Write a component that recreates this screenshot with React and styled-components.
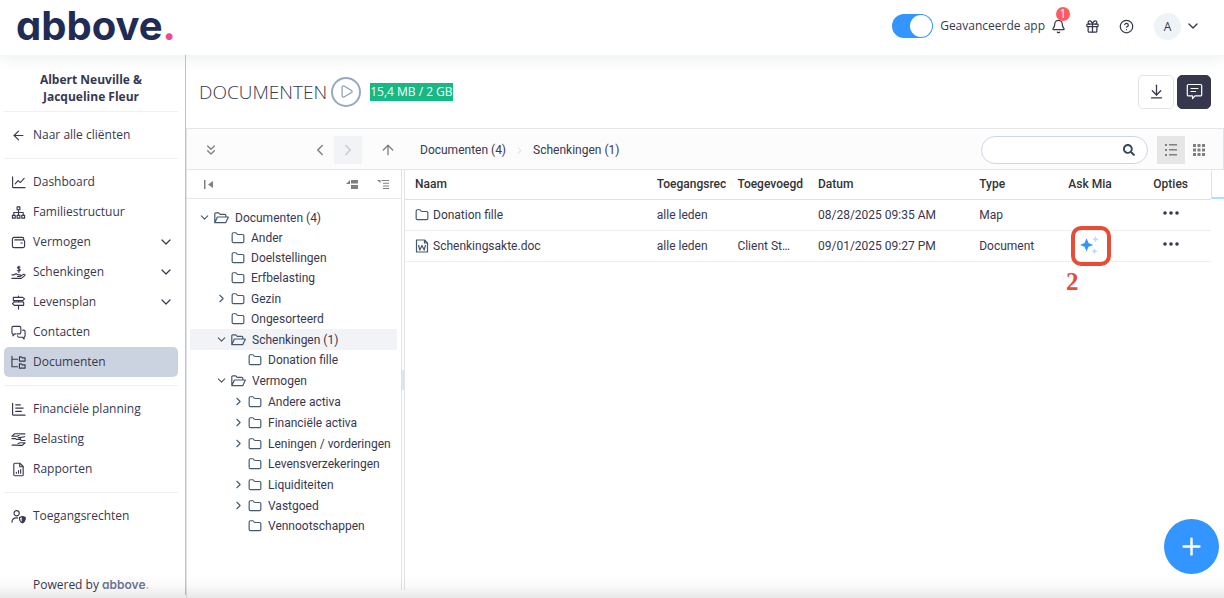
import React, {useState} from 'react';
import styled, {createGlobalStyle, css} from 'styled-components';
import {
  ArrowLeft, ArrowUp, ArrowDownToLine, Bell, ChevronDown, ChevronLeft, ChevronRight,
  ChevronsDown, CircleHelp, Gift, Folder, Play, Plus
} from 'lucide-react';
import {FaSearch} from 'react-icons/fa';

const GlobalStyle = createGlobalStyle`
  *{
    box-sizing: border-box;
  }
  body{
    margin: 0;
    background: #fff;
    color: #37384f;
    font: 12px/20px "Open Sans", sans-serif;
  }
  button, input{
    font: inherit;
    color: inherit;
  }
  button{
    padding: 0;
    border: 0;
    background: none;
    cursor: pointer;
  }
  svg{
    display: block;
    flex: none;
  }
`;

const Page = styled.div`
  min-height: 100vh;
  display: flex;
  flex-direction: column;
`;

const BottomShade = styled.div`
  position: fixed;
  left: 0;
  right: 0;
  bottom: 0;
  height: 24px;
  background: linear-gradient(transparent, rgba(0,0,0,0.02) 50%, rgba(0,0,0,0.09));
  pointer-events: none;
`;

/* top bar */

const TopBar = styled.header`
  height: 55px;
  padding: 0 23px 3px 16px;
  display: flex;
  align-items: center;
  justify-content: space-between;
  background: #fff;
  box-shadow: 0 4px 14px rgba(30,60,70,0.08);
  z-index: 2;
`;

const Wordmark = styled.a`
  font-family: Inter, sans-serif;
  font-weight: ${p => p.$small ? 600 : 700};
  font-size: ${p => p.$small ? 12 : 40}px;
  line-height: ${p => p.$small ? 20 : 48}px;
  font-feature-settings: "cv11";
  color: ${p => p.$small ? '#6f7697' : '#212c56'};
  text-decoration: none;

  & span{
    color: ${p => p.$small ? '#f5a3c7' : '#ee4a93'};
  }
`;

const TopTools = styled.div`
  display: flex;
  align-items: center;
`;

const SwitchLabel = styled.label`
  display: flex;
  align-items: center;
  gap: 7px;
  margin-right: 6px;
  cursor: pointer;
`;

const SwitchInput = styled.input`
  appearance: none;
  width: 41px;
  height: 24px;
  margin: 0;
  padding: 1px;
  display: flex;
  border-radius: 12px;
  background: #c4c9d4;

  &:checked{
    background: #3395ff;
    justify-content: flex-end;
  }

  &::before{
    content: "";
    width: 22px;
    height: 22px;
    border-radius: 50%;
    background: #fff;
  }
`;

const TopButton = styled.button`
  position: relative;
  margin-right: ${p => p.$gap}px;
`;

const Count = styled.span`
  position: absolute;
  top: -12px;
  right: -4px;
  width: 14px;
  height: 14px;
  border-radius: 50%;
  background: #ff5a5f;
  color: #fff;
  line-height: 14px;
  text-align: center;
`;

const Account = styled.button`
  display: flex;
  align-items: center;
  gap: 4px;
`;

const Avatar = styled.span`
  width: 27px;
  height: 27px;
  border-radius: 50%;
  background: #eef3f7;
  line-height: 27px;
`;

/* sidebar */

const Body = styled.div`
  flex: 1;
  display: flex;
`;

const Sidebar = styled.nav`
  flex: none;
  width: 186px;
  margin-bottom: 3px;
  padding: 16px 7px 0 4px;
  display: flex;
  flex-direction: column;
  border-right: 1px solid #c4c4c8;
`;

const Family = styled.h2`
  margin: 0;
  font-size: 12px;
  line-height: 17px;
  font-weight: 700;
  text-align: center;
`;

const Divider = styled.hr`
  width: 100%;
  margin: ${p => p.$tight ? '6px 0 8px' : '8px 0'};
  border: 0;
  border-top: 1px solid #efeff1;
`;

const NavLink = styled.a`
  height: 30px;
  padding: 0 4px 0 7px;
  display: flex;
  align-items: center;
  gap: 7px;
  border-radius: 5px;
  color: inherit;
  text-decoration: none;
  ${p => p.$active && css`background: #cad3df;`}

  & > svg:nth-of-type(2){
    margin-left: auto;
  }
`;

const Powered = styled.div`
  margin: auto 0 0 29px;
`;

/* page heading */

const Main = styled.main`
  flex: 1;
  min-width: 0;
  display: flex;
  flex-direction: column;
`;

const Heading = styled.div`
  height: 73px;
  padding: 0 13px;
  display: flex;
  align-items: center;
`;

const Title = styled.h1`
  margin: 0 4px 0 0;
  font-size: 19px;
  line-height: 28px;
  font-weight: 300;
`;

const PlayButton = styled.button`
  width: 30px;
  height: 30px;
  margin-right: 9px;
  display: grid;
  place-items: center;
  border: 2px solid #98a9bf;
  border-radius: 50%;
  color: #8c9eb8;
`;

const Usage = styled.span`
  background: #16b884;
  color: #fff;
  line-height: 18px;
`;

const HeadButtons = styled.div`
  margin-left: auto;
  display: flex;
  gap: 3px;
`;

const SquareButton = styled.button`
  width: ${p => p.$dark ? 34 : 36}px;
  height: 34px;
  display: grid;
  place-items: center;
  border-radius: 5px;
  border: 1px solid ${p => p.$dark ? '#36364d' : '#e3e3e6'};
  background: ${p => p.$dark ? '#36364d' : '#fff'};
  color: ${p => p.$dark ? '#fff' : '#37384f'};
`;

/* file manager */

const Manager = styled.section`
  flex: 1;
  display: flex;
  flex-direction: column;
  border-top: 1px solid #e4e6e8;
  border-left: 1px solid #dfe3e8;
  font-family: Roboto, sans-serif;
`;

const ManagerBar = styled.div`
  height: 41px;
  padding: 2px 10px 0;
  display: flex;
  align-items: center;
  background: #fcfcfc;
  border-bottom: 1px solid #e4e6e8;
  border-right: 1px solid #dfe3e8;
  color: #808080;
`;

const IconButton = styled.button`
  width: 28px;
  height: 28px;
  display: grid;
  place-items: center;
  color: ${p => p.disabled ? '#c8cbd0' : '#808080'};
  background: ${p => p.disabled ? '#f1f3f7' : p.$on ? '#e6e6e6' : 'none'};
`;

const TreeControls = styled.div`
  flex: none;
  width: 205px;
  display: flex;

  & > :nth-child(2){
    margin-left: auto;
  }
  & > :last-child{
    margin: 0 0 0 12px;
  }
`;

const Crumbs = styled.div`
  padding-left: 18px;
  display: flex;
  align-items: center;
  gap: 8px;
  color: #37384f;

  & svg{
    color: #d5d5d8;
  }
`;

const SearchBox = styled.label`
  width: 167px;
  height: 28px;
  margin: 0 9px 0 auto;
  padding: 0 12px;
  display: flex;
  align-items: center;
  border: 1px solid #ccd6e8;
  border-radius: 14px;
  background: #fff;
  color: #33475b;

  & input{
    flex: 1;
    min-width: 0;
    border: 0;
    outline: 0;
    background: none;
  }
`;

const Panes = styled.div`
  flex: 1;
  margin-bottom: 8px;
  display: flex;
`;

const TreePane = styled.aside`
  flex: none;
  width: 215px;
  border-right: 1px solid #dfe3e8;
`;

const TreeBar = styled.div`
  height: 29px;
  padding: 0 4px 0 7px;
  display: flex;
  align-items: center;
  border-bottom: 1px solid #e4e6e8;

  & > :nth-child(2){
    margin: 0 3px 0 auto;
  }
`;

const Tree = styled.ul`
  margin: 0;
  padding: ${p => p.$root ? '8px 4px 0 3px' : 0};
  list-style: none;
`;

const TreeRow = styled.div`
  height: ${p => p.$expandable ? 21 : 20}px;
  padding-left: ${p => p.$level * 17 + 8}px;
  display: flex;
  align-items: center;
  white-space: nowrap;
  background: ${p => p.$selected ? '#f1f3f7' : 'none'};

  & > button, & > span:first-child{
    width: 14px;
    margin-right: 2px;
  }
  & > svg{
    margin-right: 6px;
  }
`;

const Splitter = styled.div`
  flex: none;
  width: 3px;
  display: flex;
  align-items: center;
  border-right: 1px solid #dfe3e8;

  &::before{
    content: "";
    width: 3px;
    height: 20px;
    background: #d9e6f0;
  }
`;

const FilePane = styled.div`
  flex: 1;
  min-width: 0;
  display: flex;
  align-items: flex-start;
`;

const FileTable = styled.table`
  width: 100%;
  min-width: 0;
  table-layout: fixed;
  border-collapse: collapse;

  & th, & td{
    height: 31px;
    padding: 0 14px 0 10px;
    overflow: hidden;
    text-align: left;
    white-space: nowrap;
    font-weight: 400;
    border-bottom: 1px solid #eceef0;
  }
  & td{
    text-overflow: ellipsis;
  }
  & th{
    height: 29px;
    padding-right: 0;
    font-weight: 500;
    color: #333;
    border-color: #dddfe2;
  }
  & .center{
    padding: 0;
    text-align: center;
    overflow: visible;
  }
  & .center > button{
    display: block;
    margin: 0 auto;
  }
`;

/* the column title is cut 1px before the next column */
const HeadText = styled.span`
  display: block;
  margin-right: 1px;
  overflow: hidden;
`;

const FileName = styled.span`
  display: flex;
  align-items: center;
  gap: 4px;
`;

const MiaButton = styled.button`
  position: relative;
`;

const OptionsButton = styled.button`
  padding: 2px 0 6px;
`;

const Marker = styled.span`
  position: absolute;
  left: -9px;
  top: -10px;
  width: 40px;
  height: 40px;
  border: 4px solid #e64d38;
  border-radius: 10px;

  & b{
    position: absolute;
    left: -9px;
    top: 38px;
    color: #e64d38;
    font: 700 25px/28px "Liberation Serif", serif;
  }
`;

const Gutter = styled.div`
  flex: none;
  width: 13px;
  height: 29px;
  border-left: 1px solid #dfe3e8;
  border-bottom: 2px solid #a9e3f5;
`;

const AddButton = styled.button`
  position: fixed;
  right: 5px;
  bottom: 24px;
  width: 55px;
  height: 55px;
  display: grid;
  place-items: center;
  border-radius: 50%;
  background: #3395ff;
  color: #fff;
`;

const Glyph = ({size = 15, children}) => (
  <svg width={size} height={size} viewBox="0 0 16 16" fill="none" stroke="currentColor"
    strokeWidth="1.2" strokeLinecap="round" strokeLinejoin="round" aria-hidden="true">
    {children}
  </svg>
);

const icons = {
  dashboard: <Glyph><path d="M1.700 2v10.500a1 1 0 0 0 1 1H15M4.500 9.500l3-3.500 2.500 2 4-4.500"/></Glyph>,
  family: <Glyph><path d="M6.500 2h3v3h-3zM1.500 11h3v3h-3zM6.500 11h3v3h-3zM11.500 11h3v3h-3zM8 5v6M3 11V8h10v3"/></Glyph>,
  wallet: <Glyph><path d="M13.500 5.200V3.800a1.300 1.300 0 0 0-1.300-1.300H3.300A1.800 1.800 0 0 0 1.500 4.300v7.400a1.800 1.800 0 0 0 1.800 1.800h9.400a1.800 1.800 0 0 0 1.800-1.800V7a1.800 1.800 0 0 0-1.800-1.800H4M10.500 8.500h1.500"/></Glyph>,
  gift: <Glyph><path d="M1 10.500h2.200c1.600-1.600 3.200-1 4.300 0h2.200c1.200 0 1 1.700 0 1.700H7M10.500 11.800l2.700-1.800c1.300-.6 2.300.6 1.200 1.600L11 14.300H1M9.700 2.300C8.800 1.700 7 1.900 7 3s2.800 1 2.800 2.200S7.800 6.700 6.800 6M8.400 1v7"/></Glyph>,
  plan: <Glyph><path d="M8 1v1.500M8 6v1.500M8 11v4M2.500 2.500h10L14.500 4.200 12.500 6h-10zM13.500 7.500h-10L1.500 9.200l2 1.800h10z"/></Glyph>,
  contacts: <Glyph><path d="M5 9.500H4L2 11.500V9.400A1.500 1.500 0 0 1 1 8V3a1.500 1.500 0 0 1 1.500-1.500h6.500A1.500 1.500 0 0 1 10.500 3v5A1.500 1.500 0 0 1 9 9.500H6.500M12.500 5.500h1A1.500 1.500 0 0 1 15 7v4.500a1.500 1.500 0 0 1-1 1.400v2L12 13H8.500A1.500 1.500 0 0 1 7 11.500"/></Glyph>,
  documents: <Glyph><path d="M1 1.500V12.500H7M1 4.500H7M9 2h2l1 1h3v3.500H9zM9 9.500h2l1 1h3V14H9z"/></Glyph>,
  planning: <Glyph><path d="M1.700 1.500v11.500a1 1 0 0 0 1 1H15M5 3h5M5 6.500h8M5 10h6"/></Glyph>,
  tax: <Glyph><path d="M14.800 2H9.500L8.200 1.800H4L1 4.500h5.500l2-.8M1 7h3.500l1.500 1h3c1.500 0 1.500-1.700 0-1.700H7.500L14.500 5M1.200 14h5.300l1.300.3H12l3-2.800H9.500l-2 .8M15 9h-3.500L10 8.200"/></Glyph>,
  reports: <Glyph><path d="M3 2.500A1.200 1.200 0 0 1 4.200 1.300H9.500L13 4.800v8.700a1.200 1.200 0 0 1-1.200 1.200H4.200A1.200 1.200 0 0 1 3 13.500zM9.300 1.500V5H13M5.700 12v-1M8 12V9M10.300 12V8"/></Glyph>,
  access: (
    <Glyph>
      <circle cx="6" cy="4.500" r="2.800"/>
      <path d="M1 14c0-3 2-4.500 5-4.500h1"/>
      <path d="M12 8l3 1.200c0 2.700-1 4.500-3 5.500-2-1-3-2.800-3-5.500z"/>
      <path d="M12 8l3 1.200c0 2.700-1 4.500-3 5.500z" fill="currentColor"/>
    </Glyph>
  )
};

const menu = [
  [
    {label: 'Dashboard', icon: 'dashboard'},
    {label: 'Familiestructuur', icon: 'family'},
    {label: 'Vermogen', icon: 'wallet', sub: true},
    {label: 'Schenkingen', icon: 'gift', sub: true},
    {label: 'Levensplan', icon: 'plan', sub: true},
    {label: 'Contacten', icon: 'contacts'},
    {label: 'Documenten', icon: 'documents', active: true}
  ],
  [
    {label: 'Financiële planning', icon: 'planning'},
    {label: 'Belasting', icon: 'tax'},
    {label: 'Rapporten', icon: 'reports'}
  ],
  [
    {label: 'Toegangsrechten', icon: 'access'}
  ]
];

const folders = [
  {name: 'Documenten (4)', open: true, children: [
    {name: 'Ander'},
    {name: 'Doelstellingen'},
    {name: 'Erfbelasting'},
    {name: 'Gezin', more: true},
    {name: 'Ongesorteerd'},
    {name: 'Schenkingen (1)', open: true, selected: true, children: [
      {name: 'Donation fille'}
    ]},
    {name: 'Vermogen', open: true, children: [
      {name: 'Andere activa', more: true},
      {name: 'Financiële activa', more: true},
      {name: 'Leningen / vorderingen', more: true},
      {name: 'Levensverzekeringen'},
      {name: 'Liquiditeiten', more: true},
      {name: 'Vastgoed', more: true},
      {name: 'Vennootschappen'}
    ]}
  ]}
];

const files = [
  {name: 'Donation fille', access: 'alle leden', by: '', date: '08/28/2025 09:35 AM', type: 'Map'},
  {name: 'Schenkingsakte.doc', access: 'alle leden', by: 'Client Status', date: '09/01/2025 09:27 PM', type: 'Document', mia: true}
];

const OpenFolder = () => (
  <svg width="15" height="14" viewBox="0 0 15 14" fill="none" stroke="#44596c" strokeWidth="1.2" strokeLinejoin="round">
    <path d="M.8 11.500V2.800a1 1 0 0 1 1-1h2.900l1.500 1.500h4.600a1 1 0 0 1 1 1V6M.8 11.700 3.400 6h11L11.700 11.700z"/>
  </svg>
);

const ClosedFolder = () => <Folder size={14} strokeWidth={2} color="#44596c"/>;

const WordFile = () => (
  <svg width="14" height="14" viewBox="0 0 14 14" fill="none" stroke="#44596c" strokeWidth="1.2" strokeLinejoin="round">
    <path d="M1.500 1h8L12.500 4v9h-11zM9.500 1v3h3"/>
    <path d="M3.500 6l1.300 5L7 6.500 9.200 11l1.300-5"/>
  </svg>
);

const Comment = () => (
  <svg width="17" height="17" viewBox="0 0 17 17" fill="none" stroke="#fff" strokeWidth="1.2" strokeLinecap="round" strokeLinejoin="round">
    <path d="M2.500 1.500h12a1.200 1.200 0 0 1 1.200 1.200v9a1.200 1.200 0 0 1-1.200 1.200H9L6.500 15.500V12.900h-4a1.200 1.200 0 0 1-1.200-1.200v-9a1.200 1.200 0 0 1 1.200-1.200zM5 5.500h7M5 8.500h4.500"/>
  </svg>
);

const Sparkles = () => (
  <svg width="20" height="20" viewBox="0 0 20 20">
    <path fill="#3395ff" d="M6.500 2.200 8.500 7l4.700 1.900L8.500 10.800 6.500 15.500 4.600 10.800 0 8.900 4.600 7z"/>
    <path fill="#bcdcff" d="M15.500 0l1 2.300 2.300 1-2.300 1-1 2.300-1-2.300-2.300-1 2.300-1zM14.500 12l1 2.300 2.300 1-2.300 1-1 2.300-1-2.300-2.300-1 2.300-1z"/>
  </svg>
);

const Dots = () => (
  <svg width="16" height="4" viewBox="0 0 16 4" fill="#37384f">
    <circle cx="2" cy="2" r="1.8"/><circle cx="8" cy="2" r="1.8"/><circle cx="14" cy="2" r="1.8"/>
  </svg>
);

const Branch = ({items, level}) => (
  <Tree $root={level === 0}>
    {items.map(item => (
      <li key={item.name}>
        <TreeRow $level={level} $selected={item.selected} $expandable={item.open || item.more}>
          {item.open || item.more ? (
            <button aria-label={item.name}>
              {item.open ? <ChevronDown size={13} color="#44596c"/> : <ChevronRight size={13} color="#44596c"/>}
            </button>
          ) : <span/>}
          {item.open ? <OpenFolder/> : <ClosedFolder/>}
          {item.name}
        </TreeRow>
        {item.children && <Branch items={item.children} level={level + 1}/>}
      </li>
    ))}
  </Tree>
);

const Menu = () => (
  <Sidebar>
    <Family>Albert Neuville &amp;<br/>Jacqueline Fleur</Family>
    <Divider $tight/>
    <NavLink href="#clients"><ArrowLeft size={15} strokeWidth={1.8}/>Naar alle cliënten</NavLink>
    {menu.map((group, i) => (
      <React.Fragment key={i}>
        <Divider/>
        {group.map(item => (
          <NavLink key={item.label} href="#" $active={item.active}>
            {icons[item.icon]}
            {item.label}
            {item.sub && <ChevronDown size={16} strokeWidth={1.8}/>}
          </NavLink>
        ))}
      </React.Fragment>
    ))}
    <Powered>Powered by <Wordmark $small href="#abbove">abbove<span>.</span></Wordmark></Powered>
  </Sidebar>
);

const Files = () => (
  <FilePane>
    <FileTable>
      <colgroup>
        <col width="30%"/><col width="10%"/><col width="10%"/><col width="20%"/>
        <col width="10%"/><col width="10%"/><col width="10%"/>
      </colgroup>
      <thead>
        <tr>
          <th>Naam</th><th><HeadText>Toegangsrechten</HeadText></th><th>Toegevoegd</th><th>Datum</th><th>Type</th>
          <th className="center">Ask Mia</th><th className="center">Opties</th>
        </tr>
      </thead>
      <tbody>
        {files.map(file => (
          <tr key={file.name}>
            <td>
              <FileName>
                {file.mia ? <WordFile/> : <ClosedFolder/>}
                {file.name}
              </FileName>
            </td>
            <td>{file.access}</td>
            <td>{file.by}</td>
            <td>{file.date}</td>
            <td>{file.type}</td>
            <td className="center">
              {file.mia && <MiaButton aria-label="Ask Mia"><Sparkles/><Marker><b>2</b></Marker></MiaButton>}
            </td>
            <td className="center"><OptionsButton aria-label="Opties"><Dots/></OptionsButton></td>
          </tr>
        ))}
      </tbody>
    </FileTable>
    <Gutter/>
  </FilePane>
);

export default function App(){
  const [advanced, setAdvanced] = useState(true);
  const [query, setQuery] = useState('');

  return(
    <Page>
      <GlobalStyle/>
      <TopBar>
        <Wordmark href="#home">abbove<span>.</span></Wordmark>
        <TopTools>
          <SwitchLabel>
            <SwitchInput type="checkbox" checked={advanced} onChange={e => setAdvanced(e.target.checked)}/>
            Geavanceerde app
          </SwitchLabel>
          <TopButton $gap={19} aria-label="Meldingen"><Bell size={15}/><Count>1</Count></TopButton>
          <TopButton $gap={19} aria-label="Nieuw"><Gift size={15}/></TopButton>
          <TopButton $gap={20} aria-label="Help"><CircleHelp size={15}/></TopButton>
          <Account aria-label="Account"><Avatar>A</Avatar><ChevronDown size={16}/></Account>
        </TopTools>
      </TopBar>
      <Body>
        <Menu/>
        <Main>
          <Heading>
            <Title>DOCUMENTEN</Title>
            <PlayButton aria-label="Uitleg"><Play size={15}/></PlayButton>
            <Usage>15,4 MB / 2 GB</Usage>
            <HeadButtons>
              <SquareButton aria-label="Download"><ArrowDownToLine size={17} strokeWidth={1.8}/></SquareButton>
              <SquareButton $dark aria-label="Berichten"><Comment/></SquareButton>
            </HeadButtons>
          </Heading>
          <Manager>
            <ManagerBar>
              <TreeControls>
                <IconButton aria-label="Uitklappen"><ChevronsDown size={16}/></IconButton>
                <IconButton aria-label="Terug"><ChevronLeft size={18}/></IconButton>
                <IconButton aria-label="Vooruit" disabled><ChevronRight size={18}/></IconButton>
                <IconButton aria-label="Omhoog"><ArrowUp size={16}/></IconButton>
              </TreeControls>
              <Crumbs>
                <span>Documenten (4)</span><ChevronRight size={11}/><span>Schenkingen (1)</span>
              </Crumbs>
              <SearchBox>
                <input aria-label="Zoeken" value={query} onChange={e => setQuery(e.target.value)}/>
                <FaSearch size={12}/>
              </SearchBox>
              <IconButton $on aria-label="Lijst">
                <svg width="12" height="12" viewBox="0 0 12 12" fill="currentColor">
                  <path d="M0 0h2v2H0zM4 0h8v1.500H4zM0 5h2v2H0zM4 5h8v1.500H4zM0 10h2v2H0zM4 10h8v1.500H4z"/>
                </svg>
              </IconButton>
              <IconButton aria-label="Raster">
                <svg width="12" height="12" viewBox="0 0 12 12" fill="currentColor">
                  <path d="M0 0h3v3H0zM4.500 0h3v3h-3zM9 0h3v3H9zM0 4.500h3v3H0zM4.500 4.500h3v3h-3zM9 4.500h3v3H9zM0 9h3v3H0zM4.500 9h3v3h-3zM9 9h3v3H9z"/>
                </svg>
              </IconButton>
            </ManagerBar>
            <Panes>
              <TreePane>
                <TreeBar>
                  <IconButton aria-label="Paneel sluiten">
                    <svg width="9" height="9" viewBox="0 0 9 9" fill="currentColor">
                      <path d="M0 0h1.500v9H0zM9 1v7L4 4.500z"/>
                    </svg>
                  </IconButton>
                  <IconButton aria-label="Alles inklappen">
                    <svg width="12" height="9" viewBox="0 0 12 9" fill="currentColor">
                      <path d="M4 0v4H0zM5 0h7v3.500H5zM5 5h7v4H5z"/>
                    </svg>
                  </IconButton>
                  <IconButton aria-label="Alles uitklappen">
                    <svg width="12" height="9" viewBox="0 0 12 9" fill="currentColor">
                      <path d="M0 0h3.500v3zM4.500 0H12v1H4.500zM6 2.700h6v1H6zM6 5.400h6v1H6zM6 8h6v1H6z"/>
                    </svg>
                  </IconButton>
                </TreeBar>
                <Branch items={folders} level={0}/>
              </TreePane>
              <Splitter/>
              <Files/>
            </Panes>
          </Manager>
        </Main>
      </Body>
      <AddButton aria-label="Toevoegen"><Plus size={27} strokeWidth={2.2}/></AddButton>
      <BottomShade/>
    </Page>
  );
}
